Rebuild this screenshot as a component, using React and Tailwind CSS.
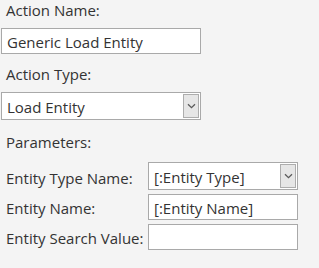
import React from "react";

const Chevron = () => (
  <svg width="9" height="6" viewBox="0 0 9 6" fill="none">
    <path d="M1 1.2 L4.5 4.6 L8 1.2" stroke="#5a5a5a" strokeWidth="1.3" />
  </svg>
);

const SelectBox = ({ value, className }) => (
  <div
    className={`flex items-center h-[28px] border border-[#a9a9a9] bg-white pl-[5px] pr-[1px] ${className}`}
  >
    <span className="flex-1 truncate pt-[1px]">{value}</span>
    <div className="w-[16px] h-[24px] border border-[#adadad] bg-[#e6e6e6] flex items-center justify-center">
      <Chevron />
    </div>
  </div>
);

const TextBox = ({ value, className }) => (
  <div
    className={`flex items-center h-[26px] border border-[#a9a9a9] bg-white pl-[5px] ${className}`}
  >
    <span className="pt-[1px]">{value}</span>
  </div>
);

export default function App() {
  return (
    <div className="w-[319px] h-[268px] bg-[#f4f4f4] text-[#333] text-[15px] leading-[20px] font-['Open_Sans',sans-serif]">
      <div className="pl-[6px] h-[28px]">Action Name:</div>
      <TextBox value="Generic Load Entity" className="ml-[1px] w-[200px]" />
      <div className="pl-[6px] pt-[10px] h-[38px]">Action Type:</div>
      <SelectBox value="Load Entity" className="ml-[1px] w-[200px] h-[27px]" />
      <div className="pl-[6px] pt-[12px] h-[42px]">Parameters:</div>
      <div className="grid grid-cols-[142px_150px] gap-y-[4px] pl-[6px]">
        <div className="pt-[6px]">Entity Type Name:</div>
        <SelectBox value="[:Entity Type]" />
        <div className="pt-[4px]">Entity Name:</div>
        <TextBox value="[:Entity Name]" />
        <div className="pt-[4px]">Entity Search Value:</div>
        <TextBox value="" />
      </div>
    </div>
  );
}
